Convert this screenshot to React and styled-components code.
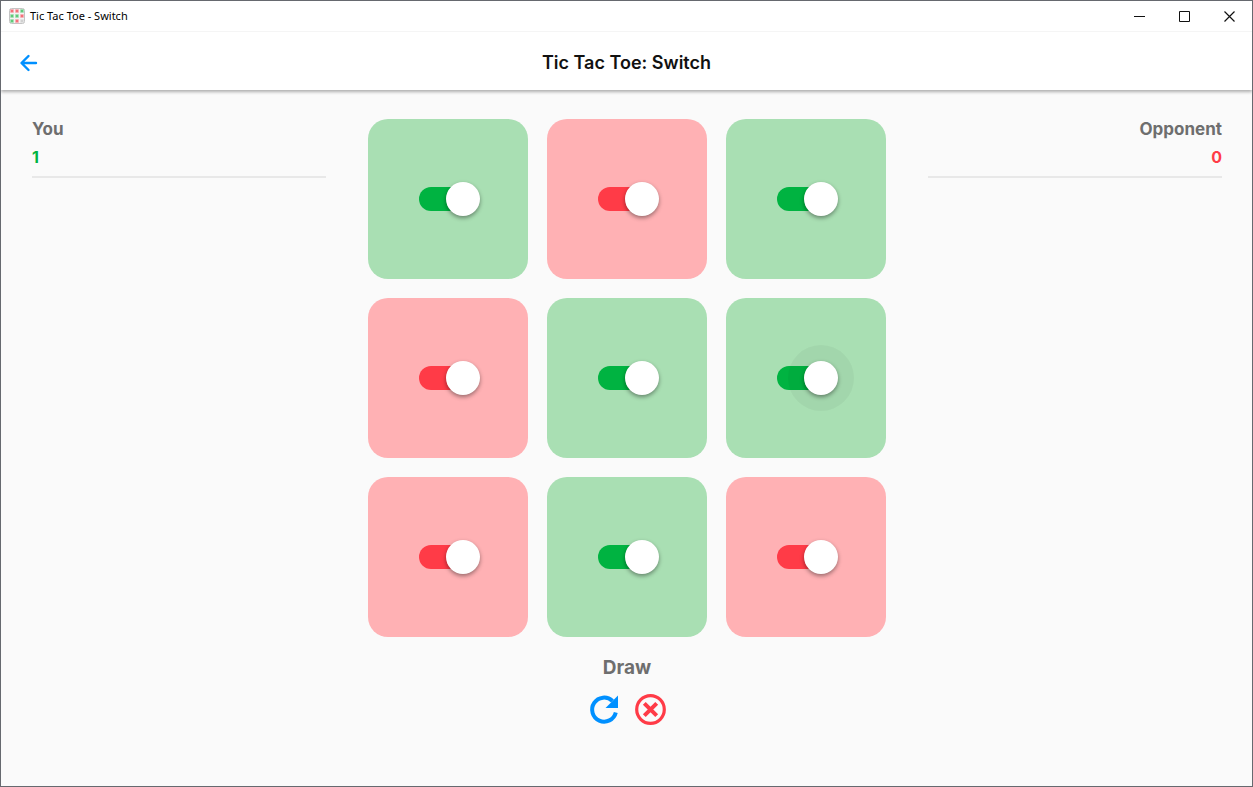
import React from "react";
import styled, { createGlobalStyle } from "styled-components";

const COLORS = {
  you: { cell: "#a9dfb3", track: "#00b341" },
  opponent: { cell: "#ffb1b4", track: "#ff3b47" },
};

const board = [
  { id: "a1", owner: "you" },
  { id: "b1", owner: "opponent" },
  { id: "c1", owner: "you" },
  { id: "a2", owner: "opponent" },
  { id: "b2", owner: "you" },
  { id: "c2", owner: "you", hovered: true },
  { id: "a3", owner: "opponent" },
  { id: "b3", owner: "you" },
  { id: "c3", owner: "opponent" },
];

const logoCells = ["#f4606a", "#f4606a", "#4cc46a", "#4cc46a", "#4cc46a", "#f4606a", "#4cc46a", "#f4606a", "#cccccc"];

function AppLogo() {
  return (
    <svg width="16" height="16" viewBox="0 0 16 16" aria-hidden="true">
      <rect x="0.5" y="0.5" width="15" height="15" rx="2" fill="#f4f4f4" stroke="#c4c4c4" />
      {logoCells.map((color, i) => (
        <g key={i} transform={`translate(${1 + (i % 3) * 5} ${1 + Math.floor(i / 3) * 5})`}>
          <rect width="4" height="4" rx="1" fill={color} opacity="0.45" />
          <rect x="1" y="1" width="2" height="2" fill={color} opacity="0.8" />
        </g>
      ))}
    </svg>
  );
}

function TitleBar() {
  return (
    <TitleBarBox>
      <AppLogo />
      <WindowTitle>Tic Tac Toe - Switch</WindowTitle>
      <WindowButton aria-label="Minimize">
        <svg width="11" height="11" viewBox="0 0 11 11" stroke="#111" fill="none">
          <path d="M0 5.5h11" />
        </svg>
      </WindowButton>
      <WindowButton aria-label="Maximize">
        <svg width="11" height="11" viewBox="0 0 11 11" stroke="#111" fill="none">
          <path d="M.5.5h10v10H.5z" />
        </svg>
      </WindowButton>
      <WindowButton aria-label="Close">
        <svg width="11" height="11" viewBox="0 0 11 11" stroke="#111" fill="none">
          <path d="M.5.5l10 10M10.5.5l-10 10" strokeWidth="1.2" />
        </svg>
      </WindowButton>
    </TitleBarBox>
  );
}

function Cell({ id, owner, hovered }) {
  return (
    <CellBox $color={COLORS[owner].cell}>
      <Switch
        type="checkbox"
        role="switch"
        aria-label={id}
        defaultChecked
        $color={COLORS[owner].track}
        $hovered={hovered}
      />
    </CellBox>
  );
}

function App() {
  return (
    <Window>
      <GlobalStyle />
      <TitleBar />
      <Header>
        <IconButton aria-label="Back">
          <svg
            width="26"
            height="24"
            viewBox="0 0 26 24"
            fill="none"
            stroke="#0090ff"
            strokeWidth="2.4"
            strokeLinecap="round"
            strokeLinejoin="round"
          >
            <path d="M20 12H6M12.5 5L5.5 12l7 7" />
          </svg>
        </IconButton>
        <HeaderTitle>Tic Tac Toe: Switch</HeaderTitle>
      </Header>
      <Game>
        <Player>
          <PlayerName>You</PlayerName>
          <Score $color={COLORS.you.track}>1</Score>
        </Player>
        <Center>
          <Board>
            {board.map((cell) => (
              <Cell key={cell.id} {...cell} />
            ))}
          </Board>
          <Result>Draw</Result>
          <Actions>
            <IconButton aria-label="Play again">
              <svg width="32" height="32" viewBox="0 0 32 32" fill="none">
                <path d="M27.8 18.5A12 12 0 1 1 24.5 7" stroke="#0090ff" strokeWidth="4" />
                <path d="M30 1.5v12.5H17.5z" fill="#0090ff" />
              </svg>
            </IconButton>
            <IconButton aria-label="Quit">
              <svg width="32" height="32" viewBox="0 0 32 32" fill="none" stroke="#ff3b47">
                <circle cx="15.5" cy="15.5" r="13.8" strokeWidth="3.2" />
                <path d="M9.3 9.3l12.4 12.4M21.7 9.3L9.3 21.7" strokeWidth="4" />
              </svg>
            </IconButton>
          </Actions>
        </Center>
        <Player $right>
          <PlayerName>Opponent</PlayerName>
          <Score $color={COLORS.opponent.track}>0</Score>
        </Player>
      </Game>
    </Window>
  );
}

export default App;

const GlobalStyle = createGlobalStyle`
  * {
    box-sizing: border-box;
  }
  body {
    margin: 0;
    font-family: Inter, sans-serif;
    background-color: #fafafa;
  }
`;

const Window = styled.div`
  min-height: 100vh;
  display: flex;
  flex-direction: column;
  border: 1px solid #66696f;
  background-color: #fafafa;
`;

const TitleBarBox = styled.div`
  height: 30px;
  display: flex;
  align-items: center;
  padding-left: 8px;
  background-color: #fff;
`;

const WindowTitle = styled.span`
  flex: 1;
  margin-left: 5px;
  font-family: "Noto Sans", sans-serif;
  font-size: 11px;
  line-height: 16px;
  color: #000;
`;

const WindowButton = styled.button`
  width: 45px;
  height: 100%;
  display: flex;
  justify-content: center;
  align-items: center;
  padding: 0;
  border: none;
  background: none;
`;

const Header = styled.header`
  height: 59px;
  display: grid;
  grid-template-columns: 1fr auto 1fr;
  align-items: center;
  padding: 4px 15px 0;
  background-color: #fff;
  border-top: 1px solid #f5f5f5;
  box-shadow: 0 2px 3px rgba(0, 0, 0, 0.3);
  clip-path: inset(0 0 -8px);
`;

const IconButton = styled.button`
  display: flex;
  justify-self: start;
  padding: 0;
  border: none;
  background: none;
  cursor: pointer;
`;

const HeaderTitle = styled.h1`
  margin: 0;
  font-size: 18px;
  font-weight: 600;
  line-height: 24px;
  color: #111;
`;

const Game = styled.main`
  display: grid;
  grid-template-columns: 1fr auto 1fr;
  column-gap: 42px;
  padding: 29px 30px 32px 31px;
`;

const Player = styled.section`
  align-self: start;
  height: 59px;
  border-bottom: 2px solid #e8e8e8;
  text-align: ${({ $right }) => ($right ? "right" : "left")};
`;

const PlayerName = styled.h2`
  margin: 0;
  font-size: 17px;
  font-weight: 700;
  line-height: 20px;
  color: #6e6e6e;
`;

const Score = styled.p`
  margin: 8px 0 0;
  font-size: 16px;
  font-weight: 700;
  line-height: 20px;
  color: ${({ $color }) => $color};
`;

const Center = styled.section`
  display: flex;
  flex-direction: column;
  align-items: center;
`;

const Board = styled.div`
  display: grid;
  grid-template-columns: repeat(3, 160px);
  gap: 19px;
`;

const CellBox = styled.div`
  height: 160px;
  display: flex;
  justify-content: center;
  align-items: center;
  border-radius: 20px;
  background-color: ${({ $color }) => $color};
`;

const Switch = styled.input`
  appearance: none;
  width: 58px;
  height: 24px;
  display: flex;
  justify-content: flex-end;
  align-items: center;
  margin: 0;
  border-radius: 12px;
  background-color: ${({ $color }) => $color};
  cursor: pointer;

  &:not(:checked) {
    justify-content: flex-start;
  }

  &::before {
    content: "";
    flex: none;
    width: 34px;
    height: 34px;
    margin-right: -3px;
    border-radius: 50%;
    background-color: #fff;
    box-shadow:
      0 2px 4px rgba(0, 0, 0, 0.4),
      0 0 0 ${({ $hovered }) => ($hovered ? "16px" : "0")} rgba(0, 0, 0, 0.04);
  }
`;

const Result = styled.p`
  margin: 19px 0 0;
  font-size: 19px;
  font-weight: 700;
  line-height: 24px;
  color: #6e6e6e;
`;

const Actions = styled.div`
  display: flex;
  gap: 15px;
  margin-top: 14px;
`;
